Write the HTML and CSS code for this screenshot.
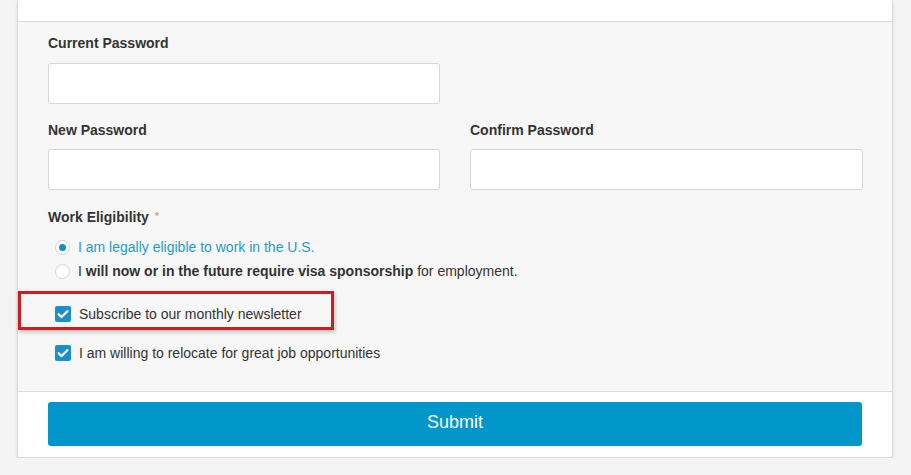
FILE: index.html
```html
<!DOCTYPE html>
<html>
<head>
<meta charset="utf-8">
<link rel="stylesheet" href="styles.css">
</head>
<body>
<div class="card">
  <div class="card-top"></div>
  <div class="card-body">
    <div class="field">
      <label class="label">Current Password</label>
      <input class="input" type="password">
    </div>
    <div class="grid">
      <div class="field">
        <label class="label">New Password</label>
        <input class="input" type="password">
      </div>
      <div class="field">
        <label class="label">Confirm Password</label>
        <input class="input" type="password">
      </div>
    </div>
    <div class="label label-elig">Work Eligibility <span class="req">*</span></div>
    <div class="radios">
      <div class="radio-row checked">
        <span class="radio on"></span>
        <span>I am legally eligible to work in the U.S.</span>
      </div>
      <div class="radio-row">
        <span class="radio"></span>
        <span>I <b>will now or in the future require visa sponsorship</b> for employment.</span>
      </div>
    </div>
    <div class="check-row highlighted">
      <span class="highlight"></span>
      <span class="check"><svg viewBox="0 0 16 16" width="16" height="16"><path d="M3.6 8.2 L6.6 11.1 L12.4 5.2" fill="none" stroke="#fff" stroke-width="2.2" stroke-linecap="round" stroke-linejoin="round"/></svg></span>
      <span>Subscribe to our monthly newsletter</span>
    </div>
    <div class="check-row second">
      <span class="check"><svg viewBox="0 0 16 16" width="16" height="16"><path d="M3.6 8.2 L6.6 11.1 L12.4 5.2" fill="none" stroke="#fff" stroke-width="2.2" stroke-linecap="round" stroke-linejoin="round"/></svg></span>
      <span>I am willing to relocate for great job opportunities</span>
    </div>
  </div>
  <div class="card-foot">
    <button class="submit">Submit</button>
  </div>
</div>
</body>
</html>
```

FILE: styles.css
```css
html, body {
  margin: 0;
  padding: 0;
  background: #f4f4f4;
  font-family: "Liberation Sans", Arial, sans-serif;
  color: #333;
}
.card {
  margin: 0 0 0 17px;
  width: 874px;
  border: 1px solid #dcdcdc;
  border-top: none;
  background: #fff;
  border-radius: 0 0 3px 3px;
  box-shadow: 0 2px 3px rgba(0,0,0,0.12);
}
.card-top {
  height: 21px;
  border-bottom: 1px solid #dcdcdc;
  background: #fff;
}
.card-body {
  background: #f7f7f7;
  padding: 11px 30px 26px 30px;
  border-bottom: 1px solid #dcdcdc;
}
.field {
  display: flex;
  flex-direction: column;
}
.card-body > .field {
  width: 392px;
}
.label {
  font-size: 14px;
  font-weight: bold;
  line-height: 20px;
  color: #333;
  margin-bottom: 10px;
}
.input {
  box-sizing: border-box;
  height: 41px;
  border: 1px solid #d6d6d6;
  border-radius: 3px;
  background: #fff;
  margin: 0;
}
.grid {
  display: grid;
  grid-template-columns: 392px 393px;
  column-gap: 30px;
  margin-top: 16px;
}
.grid .label {
  margin-bottom: 9px;
}
.label-elig {
  margin-top: 16px;
  margin-bottom: 8px;
}
.req {
  color: #e0787a;
  font-size: 11px;
  font-weight: normal;
  margin-left: 2px;
  vertical-align: 2px;
}
.radios {
  display: flex;
  flex-direction: column;
  padding-left: 7px;
}
.radio-row {
  display: flex;
  align-items: center;
  height: 24px;
  font-size: 14px;
  color: #333;
}
.radio-row.checked {
  color: #1f9cc9;
}
.radio-row b {
  color: #333;
}
.radio {
  box-sizing: border-box;
  width: 15px;
  height: 15px;
  border: 1px solid #d4d4d4;
  border-radius: 50%;
  background: #fff;
  margin-right: 8px;
  display: flex;
  align-items: center;
  justify-content: center;
  flex: none;
}
.radio.on::after {
  content: "";
  width: 7px;
  height: 7px;
  border-radius: 50%;
  background: #0f8fc8;
}
.check-row {
  display: flex;
  align-items: center;
  height: 24px;
  padding-left: 7px;
  font-size: 14px;
  color: #333;
  position: relative;
  margin-top: 19px;
}
.check-row.second {
  margin-top: 15px;
}
.check {
  width: 16px;
  height: 16px;
  border-radius: 2px;
  background: #1b8fc7;
  margin-right: 8px;
  flex: none;
  display: flex;
}
.highlight {
  position: absolute;
  left: -30px;
  top: -11px;
  width: 310px;
  height: 33px;
  border: 3px solid #cc1d1f;
  box-shadow: 1px 2px 4px rgba(0,0,0,0.25);
  pointer-events: none;
}
.card-foot {
  padding: 10px 30px 11px 30px;
  background: #fff;
  border-radius: 0 0 3px 3px;
}
.submit {
  display: block;
  width: 100%;
  height: 44px;
  border: none;
  border-radius: 3px;
  background: #0096ca;
  color: #fff;
  font-family: "Liberation Sans", Arial, sans-serif;
  font-size: 18px;
  padding: 0 0 4px 0;
}
```
